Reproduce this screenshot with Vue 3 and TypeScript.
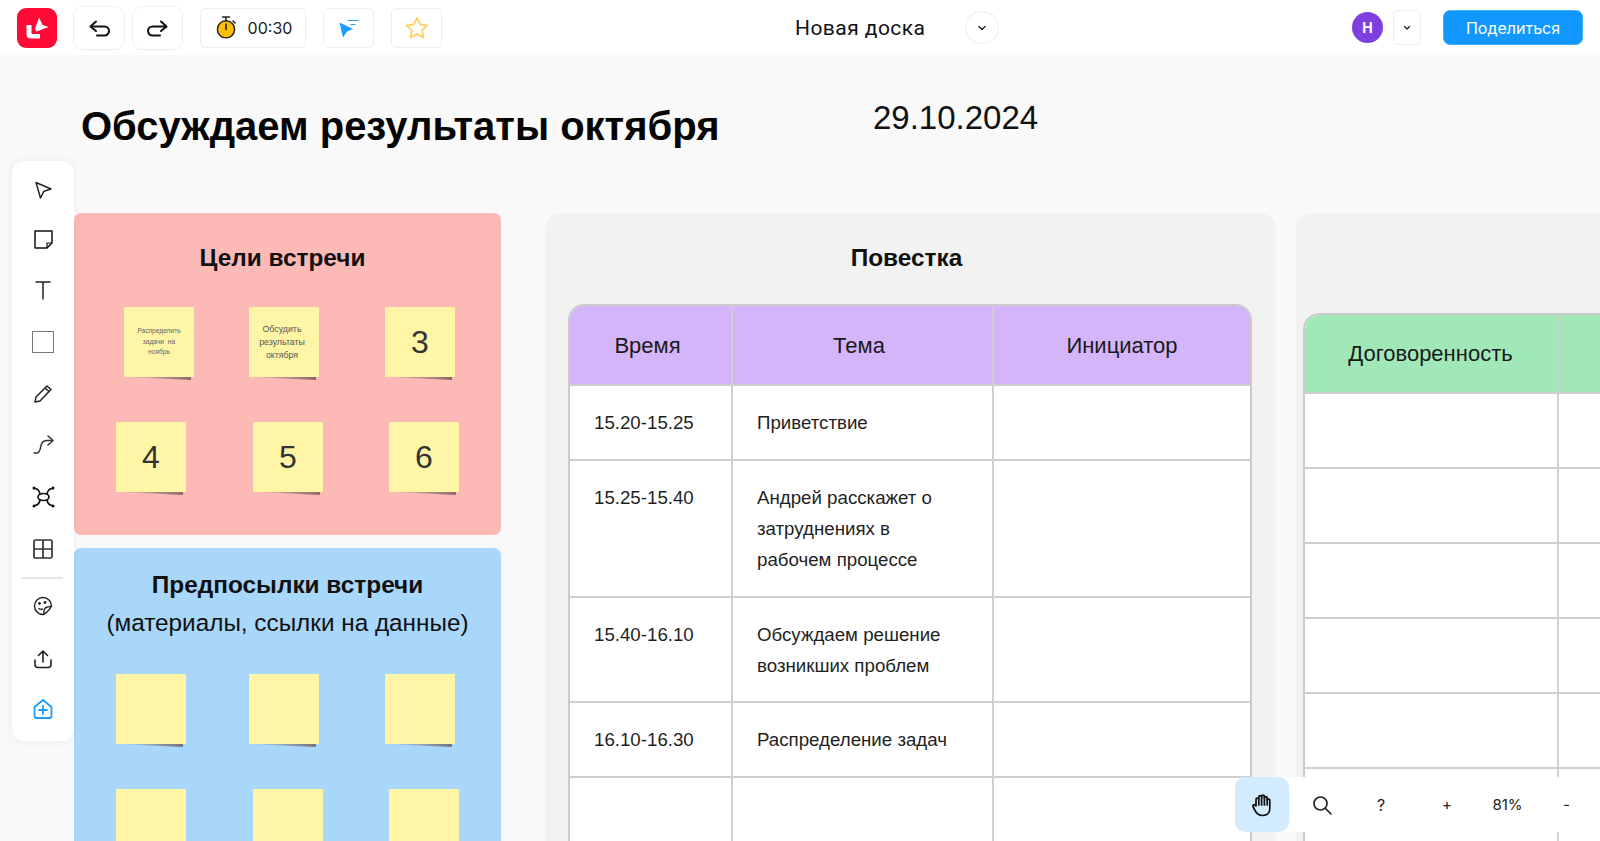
<script setup lang="ts">
interface Sticky {
  id: number
  x: number
  y: number
  text?: string
  size?: 'tiny' | 'small' | 'big'
}

interface AgendaRow {
  time: string
  topic: string[]
  height: number
}

const stickies: Sticky[] = [
  { id: 1, x: 124, y: 307, text: 'Распределить задачи  на ноябрь', size: 'tiny' },
  { id: 2, x: 249, y: 307, text: 'Обсудить результаты октября', size: 'small' },
  { id: 3, x: 385, y: 307, text: '3', size: 'big' },
  { id: 4, x: 116, y: 422, text: '4', size: 'big' },
  { id: 5, x: 253, y: 422, text: '5', size: 'big' },
  { id: 6, x: 389, y: 422, text: '6', size: 'big' },
  { id: 7, x: 116, y: 674 },
  { id: 8, x: 249, y: 674 },
  { id: 9, x: 385, y: 674 },
  { id: 10, x: 116, y: 789 },
  { id: 11, x: 253, y: 789 },
  { id: 12, x: 389, y: 789 }
]

const agenda: AgendaRow[] = [
  { time: '15.20-15.25', topic: ['Приветствие'], height: 75 },
  { time: '15.25-15.40', topic: ['Андрей расскажет о', 'затруднениях в', 'рабочем процессе'], height: 137 },
  { time: '15.40-16.10', topic: ['Обсуждаем решение', 'возникших проблем'], height: 105 },
  { time: '16.10-16.30', topic: ['Распределение задач'], height: 75 },
  { time: '', topic: [], height: 75 }
]

const agreementRows = [1, 2, 3, 4, 5, 6]
</script>

<template>
  <div class="app">
    <!-- верхняя панель -->
    <header class="topbar">
      <div class="left">
        <div class="logo">
          <svg width="40" height="40" viewBox="0 0 40 40">
            <path d="M9.500 17h5v8c0 .6.4 1 1 1h7.500v4.500h-9q-4.500 0-4.500-4.500z" fill="#fff" />
            <path d="M22 9.500l3.500 7.500 6 2-12 4.500-1.500-2.500z" fill="#fff" />
          </svg>
        </div>
        <button class="tile history first">
          <svg width="26" height="26" viewBox="0 0 26 26" fill="none" stroke="#111" stroke-width="2" stroke-linecap="round" stroke-linejoin="round">
            <path d="M10 6.500 4.500 11.500 10 16" />
            <path d="M5 11.500h13.500a4 4 0 0 1 0 9H11" />
          </svg>
        </button>
        <button class="tile history second">
          <svg width="26" height="26" viewBox="0 0 26 26" fill="none" stroke="#111" stroke-width="2" stroke-linecap="round" stroke-linejoin="round">
            <path d="M16 6.500l5.500 5L16 16" />
            <path d="M21 11.500H7.500a4 4 0 0 0 0 9H15" />
          </svg>
        </button>
        <div class="tile timer">
          <svg width="24" height="24" viewBox="0 0 24 24">
            <circle cx="12" cy="13.300" r="8.600" fill="#fbbf00" stroke="#222" stroke-width="1.400" />
            <path d="M8.500 1h7M12 1v3.500M12 8v5.500M19 5l2 2" stroke="#222" stroke-width="1.600" fill="none" stroke-linecap="round" />
          </svg>
          <span>00:30</span>
        </div>
        <button class="tile square cursor-tile">
          <svg width="26" height="26" viewBox="0 0 26 26">
            <path d="M3.500 7.500 17 14l-6 2.500-4 6z" fill="#1b9cff" />
            <path d="M11.500 5.500h11M14.500 9.500h5" stroke="#1b9cff" stroke-width="1.200" fill="none" />
          </svg>
        </button>
        <button class="tile square star-tile">
          <svg width="26" height="26" viewBox="0 0 26 26">
            <path d="M13 2.800l3.100 6.600 7.200.9-5.300 5 1.400 7.200-6.400-3.600-6.400 3.600 1.400-7.200-5.300-5 7.200-.9z" fill="none" stroke="#ffcf60" stroke-width="1.800" stroke-linejoin="round" />
          </svg>
        </button>
      </div>
      <div class="center">
        <span class="board-name">Новая доска</span>
        <button class="round-chevron">
          <svg width="10" height="10" viewBox="0 0 10 10" fill="none" stroke="#222" stroke-width="1.400" stroke-linecap="round" stroke-linejoin="round"><path d="M2 3.500l3 3 3-3" /></svg>
        </button>
      </div>
      <div class="right">
        <div class="avatar">Н</div>
        <button class="user-chevron">
          <svg width="10" height="10" viewBox="0 0 10 10" fill="none" stroke="#222" stroke-width="1.300" stroke-linecap="round" stroke-linejoin="round"><path d="M2.500 3.500 5 6l2.500-2.500" /></svg>
        </button>
        <button class="share">Поделиться</button>
      </div>
    </header>

    <!-- холст доски -->
    <main class="canvas">
      <div class="board-title">Обсуждаем результаты октября</div>
      <div class="board-date">29.10.2024</div>

      <section class="frame pink">
        <h3>Цели встречи</h3>
      </section>
      <section class="frame blue">
        <h3>Предпосылки встречи</h3>
        <p>(материалы, ссылки на данные)</p>
      </section>

      <div
        v-for="s in stickies"
        :key="s.id"
        class="sticky"
        :class="s.size"
        :style="{ left: s.x + 'px', top: s.y - 55 + 'px' }"
      >
        <span>{{ s.text }}</span>
      </div>

      <section class="frame gray agenda">
        <h3>Повестка</h3>
        <div class="table">
          <div class="row head purple">
            <div class="cell c-time">Время</div>
            <div class="cell c-topic">Тема</div>
            <div class="cell c-owner">Инициатор</div>
          </div>
          <div v-for="(row, i) in agenda" :key="i" class="row" :style="{ height: row.height + 'px' }">
            <div class="cell c-time body">{{ row.time }}</div>
            <div class="cell c-topic body">
              <div v-for="line in row.topic" :key="line">{{ line }}</div>
            </div>
            <div class="cell c-owner body"></div>
          </div>
        </div>
      </section>

      <section class="frame gray agreements">
        <div class="table">
          <div class="row head green">
            <div class="cell c-agree">Договоренность</div>
            <div class="cell c-rest"></div>
          </div>
          <div v-for="r in agreementRows" :key="r" class="row plain">
            <div class="cell c-agree"></div>
            <div class="cell c-rest"></div>
          </div>
        </div>
      </section>
    </main>

    <!-- левая панель инструментов -->
    <aside class="tools">
      <button class="tool">
        <svg width="22" height="22" viewBox="0 0 22 22" fill="none" stroke="#222" stroke-width="1.500" stroke-linejoin="round"><path d="M4 3.500 19 10l-7 2.200L8.500 19z" /></svg>
      </button>
      <button class="tool up">
        <svg width="22" height="22" viewBox="0 0 22 22" fill="none" stroke="#111" stroke-width="1.500" stroke-linejoin="round"><path d="M3 3h17v12l-5 5H3z" /><path d="M20 15h-5v5" stroke-width="1.200" /></svg>
      </button>
      <button class="tool up">
        <svg width="22" height="22" viewBox="0 0 22 22" fill="none" stroke="#222" stroke-width="1.500" stroke-linecap="round"><path d="M4 3h14M11 3v17" /></svg>
      </button>
      <button class="tool up">
        <span class="rect-icon"></span>
      </button>
      <button class="tool up">
        <svg width="22" height="22" viewBox="0 0 22 22" fill="none" stroke="#222" stroke-width="1.500" stroke-linejoin="round"><path d="M3 20l1-5L15 4l4 3.500L8 19z" /><path d="M13 6l4 3.500" /></svg>
      </button>
      <button class="tool">
        <svg width="22" height="22" viewBox="0 0 22 22" fill="none" stroke="#333" stroke-width="1.500" stroke-linecap="round" stroke-linejoin="round"><path d="M2 18H5C9 18 8 11 10 8C11 6 13 5.500 15 5.500H20.500" /><path d="M16 1l5 4.500-5 4.500" /></svg>
      </button>
      <button class="tool">
        <svg width="24" height="24" viewBox="0 0 24 24" fill="none" stroke="#111" stroke-width="1.700" stroke-linecap="round">
          <ellipse cx="12.500" cy="12" rx="5.500" ry="3.500" />
          <path d="M4 3.500Q8 4 9 9M21 3.500Q17 4 16 9M4 20.500Q8 20 9 15M21 20.500Q17 20 16 15" />
          <circle cx="3" cy="3" r="1.500" fill="#111" stroke="none" />
          <circle cx="22" cy="3" r="1.500" fill="#111" stroke="none" />
          <circle cx="3" cy="21" r="1.500" fill="#111" stroke="none" />
          <circle cx="22" cy="21" r="1.500" fill="#111" stroke="none" />
        </svg>
      </button>
      <button class="tool">
        <svg width="22" height="22" viewBox="0 0 22 22" fill="none" stroke="#333" stroke-width="1.700"><rect x="2" y="2" width="18" height="18" rx="1.500" /><path d="M11 2v18M2 11h18" /></svg>
      </button>
      <div class="divider"></div>
      <button class="tool">
        <svg width="22" height="22" viewBox="0 0 22 22" fill="none" stroke="#222" stroke-width="1.400" stroke-linecap="round" stroke-linejoin="round">
          <path d="M19.500 11a8.500 8.500 0 1 0-8.500 8.500c2 0 7-5 8.500-8.500z" />
          <path d="M12 19c-.5-3 .5-6.500 3-7 1.500-.3 3 0 4.500-1" />
          <path d="M7 13.500c1 .8 2.500 1 3.500.5" />
          <circle cx="7.500" cy="8.500" r=".7" fill="#222" />
          <circle cx="13" cy="7.500" r=".7" fill="#222" />
        </svg>
      </button>
      <button class="tool down">
        <svg width="22" height="22" viewBox="0 0 22 22" fill="none" stroke="#222" stroke-width="1.600" stroke-linecap="round" stroke-linejoin="round"><path d="M3 12v4.500a3 3 0 0 0 3 3h10a3 3 0 0 0 3-3V12" /><path d="M11 14V3M6.500 7.500 11 3l4.500 4.500" /></svg>
      </button>
      <button class="tool">
        <svg width="22" height="22" viewBox="0 0 22 22" fill="none" stroke="#1b9cff" stroke-width="1.800" stroke-linecap="round" stroke-linejoin="round"><path d="M2.500 9 11 2l8.500 7v9a2 2 0 0 1-2 2h-13a2 2 0 0 1-2-2z" /><path d="M11 8v8M7 12h8" /></svg>
      </button>
    </aside>

    <!-- нижние панели -->
    <div class="bottom-left-panel">
      <button class="hand">
        <svg width="22" height="24" viewBox="0 0 22 24" fill="none" stroke="#111" stroke-width="1.700" stroke-linecap="round" stroke-linejoin="round">
          <path d="M5 13V6.500a1.400 1.400 0 0 1 2.800 0V4a1.400 1.400 0 0 1 2.800 0v-.5a1.400 1.400 0 0 1 2.800 0V5a1.400 1.400 0 0 1 2.800 0v2a1.400 1.400 0 0 1 2.600 0v9c0 4-3 6.500-7.500 6.500-4 0-5.500-1.500-7.300-5L2 13.500c-.6-1.500 1.500-2.500 2.500-1L5 13z" />
          <path d="M7.800 6v6M10.600 4v8M13.400 4v8M16.200 5v7" />
        </svg>
      </button>
      <button class="bottom-btn search">
        <svg width="22" height="22" viewBox="0 0 22 22" fill="none" stroke="#222" stroke-width="1.700" stroke-linecap="round"><circle cx="9.500" cy="9.500" r="6.500" /><path d="M14.500 14.500 20 20" /></svg>
      </button>
      <button class="bottom-btn help">?</button>
    </div>
    <div class="zoom-panel">
      <span>+</span>
      <span class="pct">81%</span>
      <span>-</span>
    </div>
  </div>
</template>

<style>
html,
body {
  margin: 0;
  overflow: hidden;
}
</style>

<style scoped>
.app {
  position: relative;
  width: 1600px;
  height: 841px;
  overflow: hidden;
  background: #f9f9f9;
  font-family: 'Liberation Sans', Arial, sans-serif;
  color: #111;
}

button {
  padding: 0;
  font-family: inherit;
  cursor: pointer;
}

.topbar {
  position: relative;
  z-index: 3;
  display: flex;
  align-items: center;
  justify-content: space-between;
  height: 55px;
  background: #fff;
  font-family: Inter, 'Noto Sans', sans-serif;
}

.left {
  display: flex;
  align-items: center;
  padding-left: 17px;
}

.logo {
  display: flex;
  align-items: center;
  justify-content: center;
  width: 40px;
  height: 40px;
  background: #ff0a37;
  border-radius: 9px;
}

.tile {
  display: flex;
  align-items: center;
  justify-content: center;
  background: #fff;
  border: 1px solid #eeeeee;
  border-radius: 5px;
}

.history {
  height: 44px;
  border-radius: 10px;
}

.history.first {
  width: 52px;
  margin-left: 16px;
}

.history.second {
  width: 51px;
  margin-left: 7px;
}

.timer {
  gap: 10px;
  width: 106px;
  height: 40px;
  margin-left: 17px;
  font-size: 16px;
  color: #1a1a1a;
  box-sizing: border-box;
}

.square {
  width: 51px;
  height: 40px;
}

.cursor-tile {
  margin-left: 17px;
}

.star-tile {
  margin-left: 17px;
}

.center {
  position: absolute;
  left: 795px;
  top: 0;
  display: flex;
  align-items: center;
  height: 55px;
}

.board-name {
  width: 170px;
  font-family: Roboto, sans-serif;
  font-size: 21px;
  letter-spacing: 0.45px;
  color: #111;
}

.round-chevron {
  display: flex;
  align-items: center;
  justify-content: center;
  width: 34px;
  height: 33px;
  background: #fff;
  border: 1px solid #eeeeee;
  border-radius: 50%;
}

.right {
  display: flex;
  align-items: center;
  padding-right: 17px;
}

.avatar {
  display: flex;
  align-items: center;
  justify-content: center;
  width: 31px;
  height: 31px;
  background: #7f3fe0;
  border-radius: 50%;
  color: #fff;
  font-size: 14px;
  font-weight: 700;
}

.user-chevron {
  display: flex;
  align-items: center;
  justify-content: center;
  width: 28px;
  height: 35px;
  margin-left: 10px;
  background: #fff;
  border: 1px solid #eeeeee;
  border-radius: 4px;
}

.share {
  width: 140px;
  height: 35px;
  margin-left: 22px;
  background: #1198ff;
  border: 1px solid #47b0ff;
  border-radius: 7px;
  color: #fff;
  font-size: 16px;
  font-family: Inter, sans-serif;
}

.canvas {
  position: absolute;
  left: 0;
  top: 55px;
  width: 1600px;
  height: 786px;
}

.board-title {
  position: absolute;
  left: 81px;
  top: 49px;
  font-size: 40px;
  font-weight: 700;
  color: #050505;
  white-space: nowrap;
}

.board-date {
  position: absolute;
  left: 873px;
  top: 44px;
  font-size: 33px;
  color: #111;
}

.frame {
  position: absolute;
  box-sizing: border-box;
  border-radius: 7px;
}

.frame h3 {
  margin: 0;
  font-size: 24.400px;
  font-weight: 700;
  text-align: center;
}

.pink {
  left: 74px;
  top: 158px;
  width: 427px;
  height: 322px;
  padding: 31px 10px 0 0;
  background: #fcb9b5;
}

.blue {
  left: 74px;
  top: 493px;
  width: 427px;
  height: 400px;
  padding-top: 23px;
  background: #a8d7fa;
  text-align: center;
}

.blue p {
  margin: 10px 0 0;
  font-size: 24.300px;
}

.sticky {
  position: absolute;
  z-index: 1;
  display: flex;
  align-items: center;
  justify-content: center;
  box-sizing: border-box;
  width: 70px;
  height: 70px;
  padding: 0 8px;
  background: #fff5a6;
  text-align: center;
  color: #333;
}

.sticky::after {
  content: '';
  position: absolute;
  left: 2px;
  right: 3px;
  top: 100%;
  height: 3px;
  background: linear-gradient(to right, rgba(120, 90, 90, 0), rgba(100, 80, 80, 0.75));
  clip-path: polygon(0 0, 100% 0, 100% 100%);
}

.sticky.tiny {
  padding: 0 12px;
  font-size: 6.600px;
  line-height: 10.600px;
  word-spacing: 2px;
  color: #666;
}

.sticky.small {
  padding: 0 10px 0 6px;
  font-size: 8.800px;
  line-height: 13px;
  color: #555;
}

.sticky.big {
  font-size: 32px;
}

.gray {
  top: 158px;
  height: 740px;
  background: #f2f2f2;
  border-radius: 16px;
}

.agenda {
  left: 545px;
  width: 731px;
  padding: 31px 8px 0 0;
}

.agreements {
  left: 1296px;
  width: 400px;
}

.table {
  position: absolute;
  box-sizing: border-box;
  overflow: hidden;
  background: #fff;
  border: 2px solid #cbcbcb;
  border-radius: 16px 16px 0 0;
}

.agenda .table {
  left: 23px;
  top: 91px;
  width: 684px;
  height: 640px;
  border-radius: 16px;
}

.agreements .table {
  left: 7px;
  top: 100px;
  width: 500px;
  height: 640px;
}

.row {
  display: flex;
  box-sizing: border-box;
  border-bottom: 2px solid #cfcfcf;
}

.head {
  height: 80px;
  font-size: 22px;
}

.agreements .head {
  height: 79px;
}

.purple {
  background: #d4b5fa;
}

.green {
  background: #a1e8b9;
}

.plain {
  height: 75px;
}

.cell {
  box-sizing: border-box;
  border-right: 2px solid #cfcfcf;
}

.head .cell {
  display: flex;
  align-items: center;
  justify-content: center;
  color: #1a1a1a;
}

.purple .cell {
  padding-top: 2px;
}

.head .c-time {
  padding-right: 6px;
}

.head .c-topic {
  padding-right: 7px;
}

.c-time {
  width: 163px;
  flex: none;
}

.c-topic {
  width: 261px;
  flex: none;
}

.c-owner {
  flex: 1;
  border-right: none;
}

.c-agree {
  width: 254px;
  flex: none;
  padding-right: 1px;
}

.c-rest {
  flex: 1;
  border-right: none;
}

.body {
  padding: 21px 0 0 24px;
  font-size: 18.700px;
  line-height: 31px;
  color: #1f1f1f;
}

.tools {
  position: absolute;
  z-index: 2;
  left: 12px;
  top: 161px;
  display: flex;
  flex-direction: column;
  align-items: center;
  box-sizing: border-box;
  width: 62px;
  height: 580px;
  padding: 3px 1px 0 0;
  background: #fff;
  border-radius: 12px;
  box-shadow: 0 0 10px rgba(0, 0, 0, 0.06);
}

.tool {
  display: flex;
  align-items: center;
  justify-content: center;
  flex: none;
  width: 44px;
  height: 51.300px;
  background: none;
  border: none;
}

.tool.up {
  padding-bottom: 4px;
}

.tool.down {
  padding-top: 3px;
}

.rect-icon {
  width: 20px;
  height: 20px;
  border: 1px solid #777;
  background: #fff;
}

.divider {
  flex: none;
  width: 41px;
  height: 2px;
  margin-top: 3px;
  margin-bottom: 1px;
  background: #e5e5e5;
}

.bottom-left-panel {
  position: absolute;
  z-index: 2;
  left: 1235px;
  top: 777px;
  display: flex;
  align-items: center;
  width: 174px;
  height: 55px;
  background: #fff;
  border-radius: 10px;
}

.hand {
  display: flex;
  align-items: center;
  justify-content: center;
  width: 54px;
  height: 55px;
  background: #d2ebff;
  border: none;
  border-radius: 10px;
}

.bottom-btn {
  display: flex;
  align-items: center;
  justify-content: center;
  height: 55px;
  background: none;
  border: none;
}

.search {
  width: 66px;
}

.help {
  width: 52px;
  font-family: Inter, sans-serif;
  font-size: 16px;
  color: #222;
}

.zoom-panel {
  position: absolute;
  z-index: 2;
  left: 1426px;
  top: 777px;
  display: flex;
  align-items: center;
  justify-content: space-between;
  box-sizing: border-box;
  width: 164px;
  height: 55px;
  padding: 0 20px 0 16px;
  background: #fff;
  border-radius: 10px;
  font-family: Inter, sans-serif;
  font-size: 15px;
  color: #222;
}
</style>
